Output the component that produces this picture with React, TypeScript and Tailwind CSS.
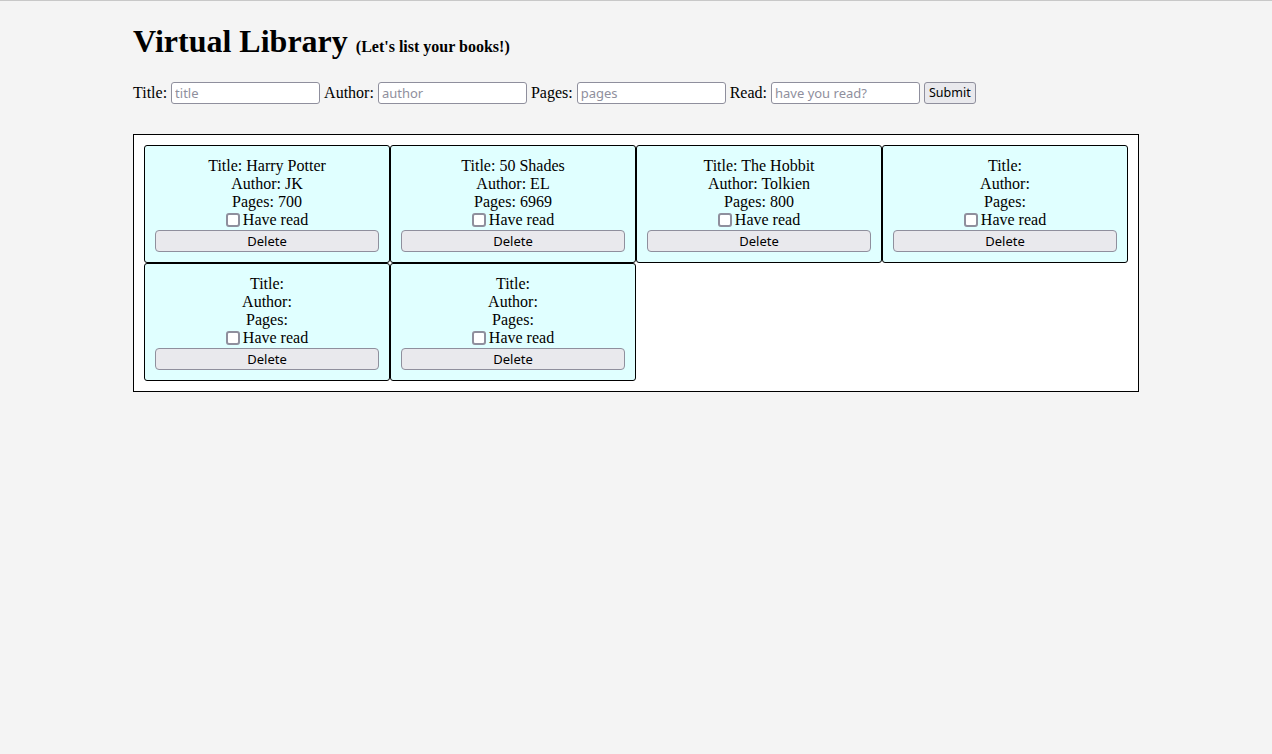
import React from "react";

const books = [
  { title: "Harry Potter", author: "JK", pages: "700" },
  { title: "50 Shades", author: "EL", pages: "6969" },
  { title: "The Hobbit", author: "Tolkien", pages: "800" },
  { title: "", author: "", pages: "" },
  { title: "", author: "", pages: "" },
  { title: "", author: "", pages: "" },
];

function Field({ label, placeholder }: { label: string; placeholder: string }) {
  return (
    <>
      <span>{label}</span>
      <input
        placeholder={placeholder}
        className="ml-[4px] mr-[4px] h-[22px] w-[149px] rounded-[3px] border border-[#8f8f9d] bg-white px-[3px] font-['Noto_Sans',sans-serif] text-[13px] text-black placeholder:text-[#8f8f9d] outline-none"
      />
    </>
  );
}

export default function App() {
  return (
    <div className="min-h-[754px] border-t border-[#c8c8c8] bg-[#f4f4f4] font-['Liberation_Serif',serif] text-[16px] leading-[18px] text-black">
      <div className="mx-[133px]">
        <h1 className="mt-[22px] mb-0 flex items-baseline text-[32px] leading-[37px] font-bold">
          Virtual Library
          <span className="ml-[8px] text-[16px] font-bold">(Let's list your books!)</span>
        </h1>
        <form className="mt-[16px] flex items-center h-[24px]" onSubmit={(e) => e.preventDefault()}>
          <span>Title:</span>
          <input
            placeholder="title"
            className="ml-[4px] mr-[4px] h-[22px] w-[149px] rounded-[3px] border border-[#8f8f9d] bg-white px-[3px] font-['Noto_Sans',sans-serif] text-[13px] text-black placeholder:text-[#8f8f9d] outline-none"
          />
          <Field label="Author:" placeholder="author" />
          <Field label="Pages:" placeholder="pages" />
          <Field label="Read:" placeholder="have you read?" />
          <button
            type="submit"
            className="h-[22px] rounded-[3px] border border-[#8f8f9d] bg-[#e9e9ed] px-[4px] font-['Noto_Sans',sans-serif] text-[12.5px] text-black"
          >
            Submit
          </button>
        </form>
        <div className="mt-[29px] w-[1006px] border border-black bg-white p-[10px]">
          <div className="grid grid-cols-4">
            {books.map((b, i) => (
              <div
                key={i}
                className="flex flex-col items-center rounded-[3px] border border-black bg-[#e0ffff] px-[10px] pt-[11px] pb-[10px]"
              >
                <div>Title: {b.title}</div>
                <div>Author: {b.author}</div>
                <div>Pages: {b.pages}</div>
                <label className="flex items-center">
                  <span className="mr-[3px] inline-block h-[14px] w-[14px] rounded-[3px] border-2 border-[#8f8f9d] bg-white box-border" />
                  Have read
                </label>
                <button className="mt-[1px] h-[22px] w-full rounded-[4px] border border-[#8f8f9d] bg-[#e9e9ed] font-['Noto_Sans',sans-serif] text-[13px] text-black">
                  Delete
                </button>
              </div>
            ))}
          </div>
        </div>
      </div>
    </div>
  );
}
